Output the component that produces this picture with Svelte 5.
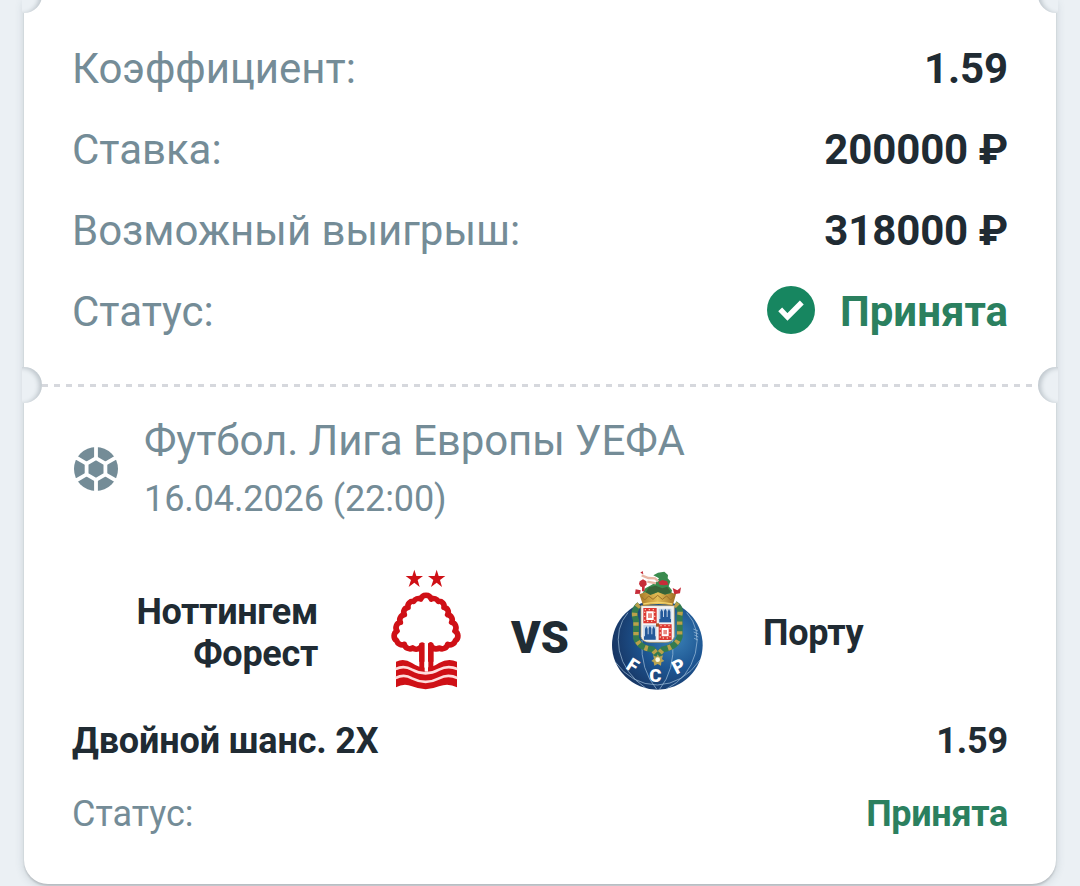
<script>
	const rows = [
		{ label: 'Коэффициент:', value: '1.59' },
		{ label: 'Ставка:', value: '200000 ₽' },
		{ label: 'Возможный выигрыш:', value: '318000 ₽' }
	];
	const event = {
		league: 'Футбол. Лига Европы УЕФА',
		date: '16.04.2026 (22:00)',
		home: 'Ноттингем Форест',
		away: 'Порту',
		market: 'Двойной шанс. 2X',
		odds: '1.59'
	};
	const status = 'Принята';
</script>

<main>
	<div class="ticket">
		<i class="notch top left"></i>
		<i class="notch top right"></i>
		<section class="summary">
			{#each rows as row}
				<div class="row">
					<span class="label">{row.label}</span>
					<strong>{row.value}</strong>
				</div>
			{/each}
			<div class="row">
				<span class="label">Статус:</span>
				<strong class="accepted">
					<svg class="check" viewBox="0 0 48 48">
						<circle cx="24" cy="24" r="24" fill="#178660" />
						<path d="M13.2 23.4l7.3 7.6L34.8 16.5" fill="none" stroke="#fff" stroke-width="5.4" />
					</svg>
					<span>{status}</span>
				</strong>
			</div>
		</section>

		<div class="divider">
			<i class="notch left"></i>
			<i class="notch right"></i>
			<svg viewBox="0 0 996 4">
				<path d="M0 1.5H996" stroke="#d6d8dd" stroke-width="3" stroke-dasharray="6 6" />
			</svg>
		</div>

		<section class="event">
			<header>
				<svg class="ball" viewBox="-22 -22 44 44">
					<circle r="22" fill="#748c97" />
					<g fill="none" stroke="#fff" stroke-width="3.8">
						<path d="M0-10.8L9.4-5.4V5.4L0 10.8-9.4 5.4V-5.4Z" />
						<path d="M0-23V-10.8M9.4-5.4L20-11.5M9.4 5.4L20 11.5M0 10.8V23M-9.4 5.4L-20 11.5M-9.4-5.4L-20-11.5" />
					</g>
				</svg>
				<div class="info">
					<p class="league">{event.league}</p>
					<p class="date">{event.date}</p>
				</div>
			</header>

			<div class="match">
				<b class="team home">{event.home}</b>
				<svg class="crest" viewBox="0 0 300 420">
					<g fill="#cf1016">
						<path d="M103 29l6 19h20l-16 12 6 21-16-13-17 13 7-21-16-12h20z" />
						<path d="M170 29l6 19h20l-16 12 6 21-16-13-17 13 7-21-16-12h20z" />
					</g>
					<path
						d="M126 305V255A18 18 0 0 1 98 264A17 17 0 0 1 73 253A17 17 0 0 1 50 242A17 17 0 0 1 51 213A17 17 0 0 1 61 187A16 16 0 0 1 73 164A15 15 0 0 1 84 142A15 15 0 0 1 101 124A17 17 0 0 1 122 117A17 17 0 0 1 154 117A17 17 0 0 1 175 124A15 15 0 0 1 192 142A15 15 0 0 1 203 164A16 16 0 0 1 215 187A17 17 0 0 1 225 213A17 17 0 0 1 226 242A17 17 0 0 1 203 253A17 17 0 0 1 178 264A18 18 0 0 1 152 255V305"
						fill="none"
						stroke="#cf1016"
						stroke-width="17"
						stroke-linejoin="round"
					/>
					<path d="M118 250H133V330H118ZM145 250H160V330H145Z" fill="#cf1016" />
					<path
						d="M48 305Q72 294 96 309Q137 337 177 309Q204 294 231 305V382Q205 368 177 379Q137 396 96 379Q72 368 48 382Z"
						fill="#cf1016"
					/>
					<path
						d="M47 327Q72 315 96 329Q137 351 177 329Q204 315 232 327M47 354Q72 341 96 355Q137 376 177 355Q204 341 232 354"
						fill="none"
						stroke="#ffdcdc"
						stroke-width="8"
					/>
					<path d="M139 252V335" stroke="#fff" stroke-width="10" />
				</svg>
				<span class="versus">VS</span>
				<svg class="crest porto" viewBox="0 0 360 420">
					<defs>
						<radialGradient id="sea" cx=".68" cy=".42" r=".7">
							<stop offset="0" stop-color="#3b82b7" />
							<stop offset=".5" stop-color="#1d5592" />
							<stop offset="1" stop-color="#173461" />
						</radialGradient>
						<linearGradient id="gold">
							<stop offset="0" stop-color="#a87927" />
							<stop offset=".5" stop-color="#e3bd55" />
							<stop offset="1" stop-color="#9c6d24" />
						</linearGradient>
					</defs>
					<ellipse cx="172" cy="255" rx="136" ry="134" fill="url(#sea)" />
					<g fill="none" stroke="#a7c6df" stroke-width="2">
						<path d="M84 158Q45 202 58 272Q72 340 137 384M260 158Q304 205 286 280Q266 354 199 387M126 240Q120 330 171 389M218 240Q226 330 178 389M45 305Q95 374 172 375Q250 372 300 300" />
						<path d="M280 207l14 6M281 216l14 6M283 225l12 6M282 235l12 5" />
					</g>
					<path d="M118 134Q96 151 108 181V235Q119 265 158 268L173 286 189 268Q230 261 239 230V166Q245 143 225 132" fill="none" stroke="#347b50" stroke-width="18" />
					<path d="M118 134Q96 151 108 181V235Q119 265 158 268L173 286 189 268Q230 261 239 230V166Q245 143 225 132" fill="none" stroke="#baa04b" stroke-width="16" stroke-dasharray="10 19" />
					<path d="M123 137H223V230Q218 247 196 247H150Q126 246 123 230Z" fill="#f2f3f4" stroke="#bd9a54" stroke-width="2" />
					<g fill="#dc3833">
						<path d="M130 144h40v46h-40zM176 193h39v47h-39z" />
						<path d="M139 154h22v26h-22zM185 204h21v25h-21z" fill="#fff" />
						<path d="M144 160h12v14h-12zM190 210h11v13h-11z" fill="#e98a80" />
					</g>
					<g stroke="#f5c4a9" stroke-width="4" stroke-dasharray="4 8" fill="none">
						<path d="M134 149h30v35h-30zM181 197h29v37h-29z" />
					</g>
					<path d="M176 146h38v42h-38zM130 195h39v44h-39z" fill="#c3d3e6" />
					<g fill="#24599a">
						<path d="M178 187v-10h3v-22l4-8 4 8v16h3v-18l4-7 4 7v18h3v-16l4-8 4 8v22h2v10zM132 239v-10h3v-22l4-8 4 8v16h3v-18l4-7 4 7v18h3v-16l4-8 4 8v22h2v10z" />
					</g>
					<path d="M168 190h9v10h-9z" fill="#a65225" />
					<path d="M118 103Q173 77 228 103L218 137Q173 127 130 138Z" fill="url(#gold)" />
					<path d="M124 110l10 10 12-12 13 10 14-12 14 12 13-10 12 12 12-12" fill="none" stroke="#9b7028" stroke-width="3" />
					<path d="M130 132Q173 123 217 132" fill="none" stroke="#f1d26d" stroke-width="4" />
					<path d="M128 99l8-14 17-9 16-10 8-11-17-9 14-8 19-3 11 10-1 10 8 9-5 15 10 12-2 9-17 3-20-8-21 8-19-6z" fill="#3a8b4e" />
					<path d="M137 97l10-15 20-5 20 8 15-5 11 17-18 7-22-8-22 9z" fill="#386438" />
					<path d="M119 64l10-6 10 6 1 10-8 8-10-2-5-8zM126 80h8v14h-8zM107 88l15 3-2 10-15 1zM218 84l14 7 11-9-3 18-17 3zM121 38l7-5 2 10zM175 66l12-6 14 4 4 10-14 2-12-2z" fill="#c62d39" />
					<path d="M125 46l20 8 20 1 10 9M142 65l26 5" fill="none" stroke="#e8b7a5" stroke-width="7" />
					<path d="M173 283l5 7 11-4-3 11 7 6-9 4-1 10-10-5-10 5-2-10-7-4 8-7-3-10 10 4z" fill="#b9a452" />
					<circle cx="173" cy="299" r="7" fill="#fffbe0" />
					<g class="initials">
						<text transform="translate(75 325) rotate(32)">F</text>
						<text transform="translate(148 365)">C</text>
						<text transform="translate(229 344) rotate(-27)">P</text>
					</g>
				</svg>
				<b class="team">{event.away}</b>
			</div>

			<div class="line market">
				<b>{event.market}</b>
				<b class="odds">{event.odds}</b>
			</div>
			<div class="line">
				<span class="label">Статус:</span>
				<b class="accepted">{status}</b>
			</div>
		</section>
	</div>
</main>

<style>
	:global(body) {
		margin: 0;
	}

	main {
		box-sizing: border-box;
		width: 1080px;
		height: 886px;
		padding: 0 24px 2px;
		overflow: hidden;
		background: #ebf0f4;
		font-family: Roboto, sans-serif;
		color: #202b33;
	}

	.ticket {
		position: relative;
		height: 884px;
		background: #fff;
		border-radius: 0 0 24px 24px;
		box-shadow: 0 2px 2px rgba(0, 0, 0, 0.14), 0 2px 10px rgba(60, 80, 95, 0.2);
	}

	.summary {
		box-sizing: border-box;
		height: 384px;
		padding: 28px 48px 0;
	}

	.row {
		display: flex;
		justify-content: space-between;
		align-items: center;
		height: 81px;
		font-size: 42px;
	}
	.row strong {
		font-weight: 700;
		letter-spacing: -0.1px;
	}

	.label {
		color: #748c97;
		letter-spacing: -0.03px;
	}

	.accepted {
		display: flex;
		align-items: center;
		color: #2b805f;
	}
	.row .accepted {
		letter-spacing: 0;
	}

	.check {
		width: 48px;
		height: 48px;
		margin: -4px 25px 0 0;
	}

	.divider {
		position: relative;
		height: 4px;
		padding: 0 18px;
	}
	.divider svg {
		display: block;
		width: 996px;
		height: 4px;
	}

	.notch {
		position: absolute;
		top: -17px;
		width: 36px;
		height: 36px;
		border-radius: 50%;
		background: #ebf0f4;
	}
	.notch.left {
		left: -18px;
		box-shadow: inset -3px 1px 4px rgba(70, 85, 95, 0.26);
		clip-path: inset(0 0 0 16px);
	}
	.notch.right {
		right: -18px;
		box-shadow: inset 3px 1px 4px rgba(70, 85, 95, 0.26);
		clip-path: inset(0 16px 0 0);
	}
	.notch.top {
		top: -23px;
	}

	.event {
		padding: 27px 48px 0;
	}

	header {
		display: flex;
		align-items: center;
		gap: 26px;
		height: 108px;
		padding-left: 2px;
		color: #748c97;
	}
	header p {
		margin: 0;
	}
	.info {
		padding-top: 2px;
	}
	.ball {
		width: 44px;
		height: 44px;
	}
	.league {
		font-size: 42px;
		line-height: 58px;
		letter-spacing: -0.08px;
	}
	.date {
		font-size: 36px;
		line-height: 59px;
		letter-spacing: -0.1px;
	}

	.match {
		display: flex;
		align-items: center;
		height: 140px;
		padding-top: 37px;
	}
	.team {
		width: 210px;
		padding-top: 5px;
		font-size: 36px;
		line-height: 42px;
		letter-spacing: -0.3px;
	}
	.home {
		width: 182px;
		padding: 6px 62px 0 64px;
		text-align: right;
	}
	.crest {
		flex: none;
		width: 100px;
		height: 140px;
	}
	.versus {
		width: 60px;
		margin: 15px 30px 0;
		font-size: 45px;
		font-weight: 900;
		text-align: center;
	}
	.porto {
		width: 120px;
		margin-right: 43px;
	}
	.initials {
		fill: #fff;
		font: 900 56px Roboto, sans-serif;
	}

	.line {
		display: flex;
		justify-content: space-between;
		align-items: center;
		height: 73px;
		font-size: 36px;
		letter-spacing: -0.15px;
	}
	.line .accepted {
		letter-spacing: -0.3px;
	}
	.market {
		padding-top: 4px;
	}
</style>
